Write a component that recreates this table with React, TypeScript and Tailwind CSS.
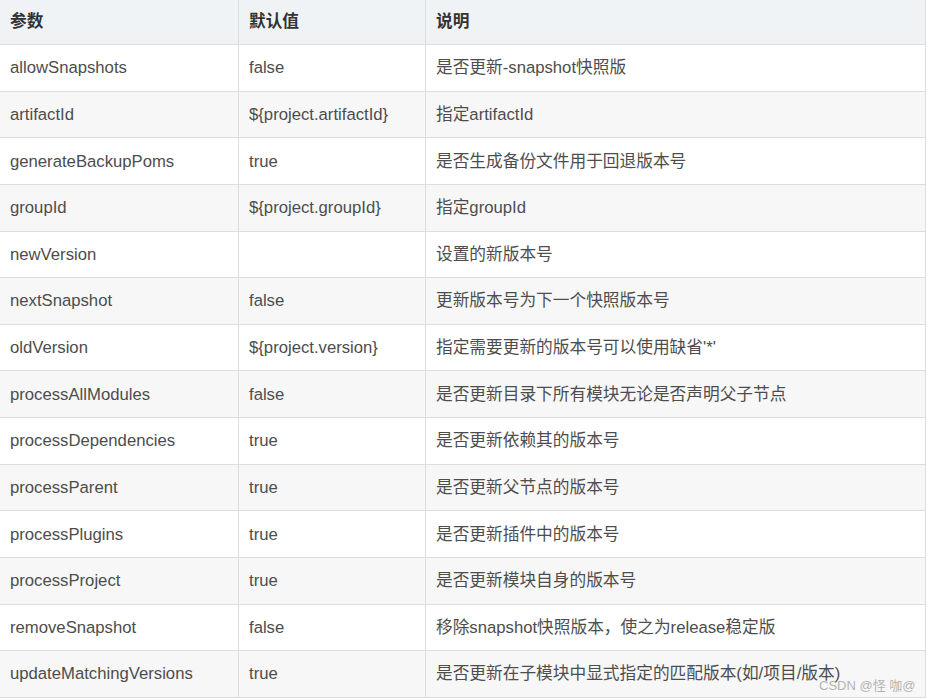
import React from "react";

const rows: [string, string, string][] = [
  ["allowSnapshots", "false", "是否更新-snapshot快照版"],
  ["artifactId", "${project.artifactId}", "指定artifactId"],
  ["generateBackupPoms", "true", "是否生成备份文件用于回退版本号"],
  ["groupId", "${project.groupId}", "指定groupId"],
  ["newVersion", "", "设置的新版本号"],
  ["nextSnapshot", "false", "更新版本号为下一个快照版本号"],
  ["oldVersion", "${project.version}", "指定需要更新的版本号可以使用缺省'*'"],
  ["processAllModules", "false", "是否更新目录下所有模块无论是否声明父子节点"],
  ["processDependencies", "true", "是否更新依赖其的版本号"],
  ["processParent", "true", "是否更新父节点的版本号"],
  ["processPlugins", "true", "是否更新插件中的版本号"],
  ["processProject", "true", "是否更新模块自身的版本号"],
  ["removeSnapshot", "false", "移除snapshot快照版本，使之为release稳定版"],
  ["updateMatchingVersions", "true", "是否更新在子模块中显式指定的匹配版本(如/项目/版本)"],
];

export default function App() {
  return (
    <div
      className="relative w-[928px] h-[700px] overflow-hidden bg-white"
      style={{ fontFamily: '"Liberation Sans", Arial, "Noto Sans CJK SC", sans-serif' }}
    >
      <table className="border-collapse mt-[-1px] ml-[-1px] w-[927px] table-fixed text-[16.7px]">
        <colgroup>
          <col className="w-[239px]" />
          <col className="w-[187px]" />
          <col />
        </colgroup>
        <thead>
          <tr className="bg-[#eff3f6] h-[45px]">
            <th className="border border-[#dddddd] text-left font-bold text-[#333333] pl-[10px] align-middle">参数</th>
            <th className="border border-[#dddddd] text-left font-bold text-[#333333] pl-[10px] align-middle">默认值</th>
            <th className="border border-[#dddddd] text-left font-bold text-[#333333] pl-[10px] align-middle">说明</th>
          </tr>
        </thead>
        <tbody>
          {rows.map((r, i) => (
            <tr key={i} className={i % 2 === 0 ? "bg-white h-[46.64px]" : "bg-[#f7f7f7] h-[46.64px]"}>
              <td className="border border-[#dddddd] text-[#4d4d4d] pl-[10px] align-middle whitespace-nowrap">{r[0]}</td>
              <td className="border border-[#dddddd] text-[#4d4d4d] pl-[10px] align-middle whitespace-nowrap">{r[1]}</td>
              <td className="border border-[#dddddd] text-[#4d4d4d] pl-[10px] align-middle whitespace-nowrap">{r[2]}</td>
            </tr>
          ))}
        </tbody>
      </table>
      <div className="absolute left-[819px] top-[676px] text-[13px] text-[#b4b4b4] whitespace-nowrap">
        CSDN @怪 咖@
      </div>
    </div>
  );
}
